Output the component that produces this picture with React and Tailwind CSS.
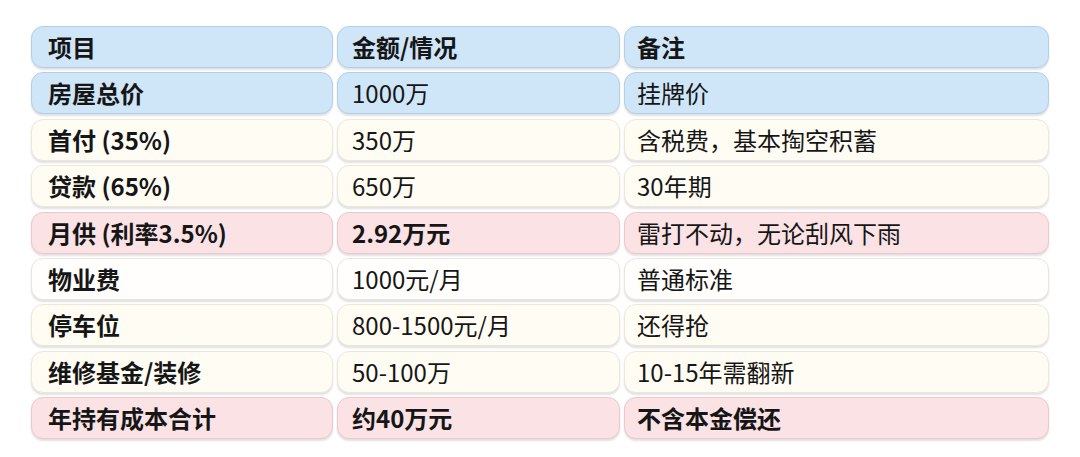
import React from "react";

// Cell colour themes
const themes = {
  blue: "bg-[#cfe6f9] border-[#b3cee6]",
  cream: "bg-[#fffdf3] border-[#ebe7db]",
  white: "bg-[#fffefc] border-[#e9e6e0]",
  pink: "bg-[#fae2e5] border-[#eec7cc]",
};

const rows = [
  { theme: "blue", cells: ["项目", "金额/情况", "备注"], bold: [true, true, true] },
  { theme: "blue", cells: ["房屋总价", "1000万", "挂牌价"], bold: [true, false, false] },
  { theme: "cream", cells: ["首付 (35%)", "350万", "含税费，基本掏空积蓄"], bold: [true, false, false] },
  { theme: "cream", cells: ["贷款 (65%)", "650万", "30年期"], bold: [true, false, false] },
  { theme: "pink", cells: ["月供 (利率3.5%)", "2.92万元", "雷打不动，无论刮风下雨"], bold: [true, true, false] },
  { theme: "white", cells: ["物业费", "1000元/月", "普通标准"], bold: [true, false, false] },
  { theme: "cream", cells: ["停车位", "800-1500元/月", "还得抢"], bold: [true, false, false] },
  { theme: "cream", cells: ["维修基金/装修", "50-100万", "10-15年需翻新"], bold: [true, false, false] },
  { theme: "pink", cells: ["年持有成本合计", "约40万元", "不含本金偿还"], bold: [true, true, true] },
];

function Cell({ theme, bold, pad, children }) {
  return (
    <div
      className={`flex items-center h-[42px] rounded-[12px] border shadow-[0_2px_2px_rgba(0,0,0,0.12)] ${themes[theme]} ${pad} ${bold ? "font-bold" : "font-normal"}`}
    >
      {children}
    </div>
  );
}

export default function App() {
  return (
    <div
      className="w-[1080px] h-[457px] bg-white pt-[26px] pl-[31px] text-[#161616] text-[24px] leading-none overflow-hidden"
      style={{ fontFamily: '"Noto Sans CJK SC", "Noto Sans", sans-serif' }}
    >
      <div className="flex flex-col gap-[4.4px]">
        {rows.map((row, i) => (
          <div key={i} className="grid grid-cols-[302px_283px_425px] gap-x-[4px]">
            <Cell theme={row.theme} bold={row.bold[0]} pad="pl-[16px]">{row.cells[0]}</Cell>
            <Cell theme={row.theme} bold={row.bold[1]} pad="pl-[14px]">{row.cells[1]}</Cell>
            <Cell theme={row.theme} bold={row.bold[2]} pad="pl-[12px]">{row.cells[2]}</Cell>
          </div>
        ))}
      </div>
    </div>
  );
}
